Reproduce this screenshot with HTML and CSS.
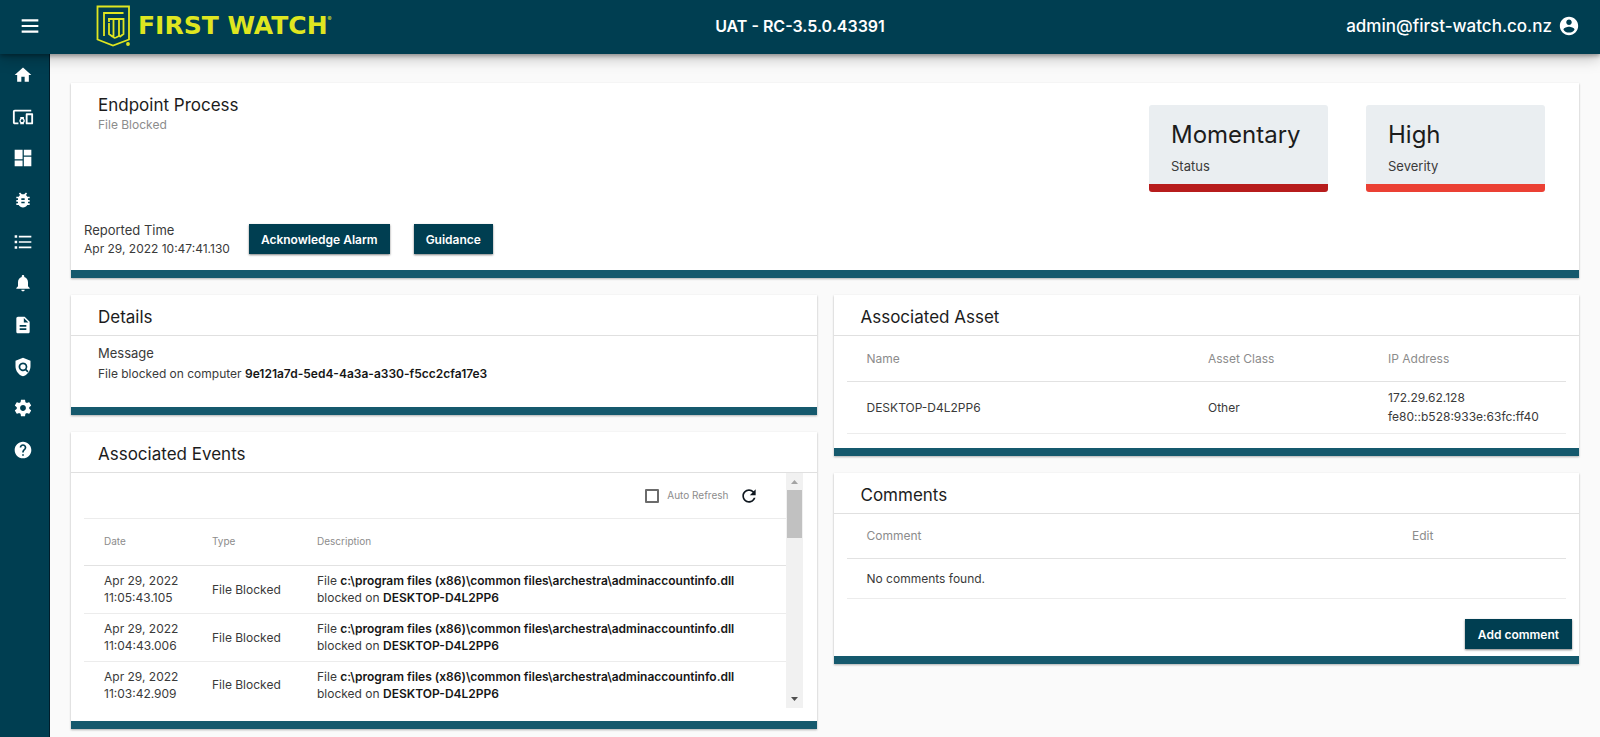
FILE: index.html
```html
<!DOCTYPE html>
<html lang="en">
<head>
<meta charset="utf-8">
<title>Endpoint Process - First Watch</title>
<link rel="stylesheet" href="styles.css">
</head>
<body>
<header class="topbar">
  <div class="topbar-left">
    <button class="icon-button" type="button" aria-label="Menu"><svg class="icon" viewBox="0 0 24 24"><path d="M2 4h20v2.600H2zM2 10.700h20v2.600H2zM2 17.400h20V20H2z"/></svg></button>
    <a class="logo" href="#">
      <svg class="logo-mark" viewBox="0 0 36 42" aria-hidden="true">
        <path d="M1.500 1.500h31.500v33L17 40.500 1.500 34.500z"/>
        <path class="logo-inner" d="M27.500 8H8V31M12 14h15.500v15l-4 3M13 18v10M13 14v3M17.500 14v17.500q0 2 2.500 1l3-1.500V14M13 27v2l4 3"/>
        <circle cx="32" cy="39" r="1"/>
      </svg>
      <span class="logo-text">FIRST WATCH</span><span class="logo-reg">®</span>
    </a>
  </div>
  <div class="version">UAT - RC-3.5.0.43391</div>
  <a class="account" href="#"><span>admin@first-watch.co.nz</span><svg class="account-icon" viewBox="0 0 24 24"><path d="M12 2C6.480 2 2 6.480 2 12s4.480 10 10 10 10-4.480 10-10S17.520 2 12 2zm0 3c1.660 0 3 1.340 3 3s-1.340 3-3 3-3-1.340-3-3 1.340-3 3-3zm0 14.200c-2.500 0-4.710-1.280-6-3.220.030-1.990 4-3.080 6-3.080 1.990 0 5.970 1.090 6 3.080-1.290 1.940-3.500 3.220-6 3.220z"/></svg></a>
</header>
<div class="shell">
  <nav class="sidebar" aria-label="Main">
    <a href="#" aria-label="Home"><svg class="icon" viewBox="0 0 24 24"><path d="M10 20v-6h4v6h5v-8h3L12 3 2 12h3v8z"/></svg></a>
    <a href="#" aria-label="Devices"><svg class="icon icon-wide" viewBox="0 0 24 24"><path d="M3 6h18V4H3c-1.100 0-2 .900-2 2v12c0 1.100.900 2 2 2h4v-2H3V6zm10 6H9v1.780c-.610.550-1 1.330-1 2.220s.390 1.670 1 2.220V20h4v-1.780c.610-.550 1-1.340 1-2.220s-.390-1.670-1-2.220V12zm-2 5.500c-.830 0-1.500-.670-1.500-1.500s.670-1.500 1.500-1.500 1.500.670 1.500 1.500-.670 1.500-1.500 1.500zM22 8h-6c-.500 0-1 .500-1 1v10c0 .500.500 1 1 1h6c.500 0 1-.500 1-1V9c0-.500-.500-1-1-1zm-1 10h-4v-8h4v8z"/></svg></a>
    <a href="#" aria-label="Dashboard"><svg class="icon" viewBox="0 0 24 24"><path d="M2 2h9.500v11.500H2zM2 15h9.500v7H2zM13 10.500h9V22h-9zM13 2h9v7h-9z"/></svg></a>
    <a href="#" aria-label="Threats"><svg class="icon" viewBox="0 0 24 24"><path d="M20 8h-2.810c-.450-.780-1.070-1.450-1.820-1.960L17 4.410 15.590 3l-2.170 2.170C12.960 5.060 12.490 5 12 5c-.490 0-.960.060-1.410.170L8.410 3 7 4.410l1.620 1.630C7.880 6.550 7.260 7.220 6.810 8H4v2h2.090c-.050.330-.090.660-.090 1v1H4v2h2v1c0 .340.040.670.090 1H4v2h2.810c1.040 1.790 2.970 3 5.190 3s4.150-1.210 5.190-3H20v-2h-2.090c.050-.330.090-.660.090-1v-1h2v-2h-2v-1c0-.340-.040-.670-.090-1H20V8zm-6 8h-4v-2h4v2zm0-4h-4v-2h4v2z"/></svg></a>
    <a href="#" aria-label="Lists"><svg class="icon" viewBox="0 0 24 24"><path d="M2 4h3v3H2zM2 10.500h3v3H2zM2 17h3v3H2zM7 4.500h15v2H7zM7 11h15v2H7zM7 17.500h15v2H7z"/></svg></a>
    <a href="#" aria-label="Alarms"><svg class="icon" viewBox="0 0 24 24"><path d="M12 22c1.100 0 2-.900 2-2h-4c0 1.100.890 2 2 2zm6-6v-5c0-3.070-1.640-5.640-4.500-6.320V4c0-.830-.670-1.500-1.500-1.500s-1.500.670-1.500 1.500v.680C7.630 5.360 6 7.920 6 11v5l-2 2v1h16v-1l-2-2z"/></svg></a>
    <a href="#" aria-label="Reports"><svg class="icon" viewBox="0 0 24 24"><path d="M14 2H6c-1.100 0-2 .900-2 2v16c0 1.100.890 2 2 2h12c1.100 0 2-.900 2-2V8l-6-6zm2 16H8v-2h8v2zm0-4H8v-2h8v2zm-3-5V3.500L18.500 9H13z"/></svg></a>
    <a href="#" aria-label="Policies"><svg class="icon" viewBox="0 0 24 24"><path fill-rule="evenodd" d="M12 1l9 3.500V11c0 5.550-3.840 10.740-9 12-5.160-1.260-9-6.450-9-12V4.500zM12 6.500a5.300 5.300 0 1 0 2.900 9.700l2.400 2.400 1.400-1.500-2.400-2.300A5.300 5.300 0 0 0 12 6.500zm0 2.100a3.200 3.200 0 1 1 0 6.400 3.200 3.200 0 0 1 0-6.400z"/></svg></a>
    <a href="#" aria-label="Settings"><svg class="icon" viewBox="0 0 24 24"><path d="M19.430 12.980c.040-.320.070-.640.070-.980s-.030-.660-.070-.980l2.110-1.650c.190-.150.240-.420.120-.640l-2-3.460c-.120-.220-.390-.300-.610-.220l-2.490 1c-.520-.400-1.080-.730-1.690-.980l-.380-2.650C14.460 2.180 14.250 2 14 2h-4c-.250 0-.460.180-.490.420l-.380 2.650c-.610.250-1.170.590-1.690.980l-2.490-1c-.230-.090-.490 0-.610.220l-2 3.460c-.130.220-.070.490.120.640l2.110 1.650c-.040.320-.070.650-.070.980s.030.660.070.980l-2.110 1.650c-.190.150-.240.420-.120.640l2 3.460c.120.220.390.300.610.220l2.490-1c.520.400 1.080.730 1.690.980l.380 2.650c.030.240.240.420.490.420h4c.250 0 .460-.180.490-.420l.380-2.650c.610-.250 1.170-.590 1.690-.980l2.490 1c.230.090.490 0 .610-.220l2-3.460c.120-.220.070-.490-.120-.640l-2.110-1.650zM12 15.500c-1.930 0-3.500-1.570-3.500-3.500s1.570-3.500 3.500-3.500 3.500 1.570 3.500 3.500-1.570 3.500-3.500 3.500z"/></svg></a>
    <a href="#" aria-label="Help"><svg class="icon" viewBox="0 0 24 24"><path d="M12 2C6.480 2 2 6.480 2 12s4.480 10 10 10 10-4.480 10-10S17.520 2 12 2zm1 17h-2v-2h2v2zm2.070-7.750l-.900.920C13.450 12.900 13 13.500 13 15h-2v-.500c0-1.100.450-2.100 1.170-2.830l1.240-1.260c.370-.360.590-.860.590-1.410 0-1.100-.900-2-2-2s-2 .900-2 2H8c0-2.210 1.790-4 4-4s4 1.790 4 4c0 .880-.360 1.680-.930 2.250z"/></svg></a>
  </nav>
  <main class="content">
    <section class="card summary">
      <div class="summary-top">
        <div>
          <h1 class="heading">Endpoint Process</h1>
          <p class="subtitle">File Blocked</p>
        </div>
        <div class="tiles">
          <div class="tile tile-status"><div class="tile-value">Momentary</div><div class="tile-label">Status</div></div>
          <div class="tile tile-severity"><div class="tile-value">High</div><div class="tile-label">Severity</div></div>
        </div>
      </div>
      <div class="summary-bottom">
        <div class="reported">
          <div class="label">Reported Time</div>
          <div class="value">Apr 29, 2022 10:47:41.130</div>
        </div>
        <div class="summary-actions">
          <button class="button" type="button">Acknowledge Alarm</button>
          <button class="button" type="button">Guidance</button>
        </div>
      </div>
    </section>
    <div class="columns">
      <div class="column">
        <section class="card">
          <h2 class="heading card-heading">Details</h2>
          <div class="details">
            <div class="label">Message</div>
            <div class="value">File blocked on computer <b>9e121a7d-5ed4-4a3a-a330-f5cc2cfa17e3</b></div>
          </div>
        </section>
        <section class="card">
          <h2 class="heading card-heading">Associated Events</h2>
          <div class="scroller">
            <div class="scroll-content">
              <div class="toolbar">
                <label class="check"><input type="checkbox">Auto Refresh</label>
                <button class="icon-button" type="button" aria-label="Refresh"><svg class="refresh-icon" viewBox="0 0 24 24"><path d="M17.650 6.350C16.200 4.900 14.210 4 12 4c-4.420 0-7.990 3.580-7.990 8s3.570 8 7.990 8c3.730 0 6.840-2.550 7.730-6h-2.080c-.820 2.330-3.040 4-5.650 4-3.310 0-6-2.690-6-6s2.690-6 6-6c1.660 0 3.140.690 4.220 1.780L13 11h7V4l-2.350 2.350z"/></svg></button>
              </div>
              <table class="events">
                <colgroup><col class="col-date"><col class="col-type"><col></colgroup>
                <thead><tr><th>Date</th><th>Type</th><th>Description</th></tr></thead>
                <tbody>
                  <tr><td>Apr 29, 2022<br>11:05:43.105</td><td>File Blocked</td><td>File <b>c:\program files (x86)\common files\archestra\adminaccountinfo.dll</b><br>blocked on <b>DESKTOP-D4L2PP6</b></td></tr>
                  <tr><td>Apr 29, 2022<br>11:04:43.006</td><td>File Blocked</td><td>File <b>c:\program files (x86)\common files\archestra\adminaccountinfo.dll</b><br>blocked on <b>DESKTOP-D4L2PP6</b></td></tr>
                  <tr><td>Apr 29, 2022<br>11:03:42.909</td><td>File Blocked</td><td>File <b>c:\program files (x86)\common files\archestra\adminaccountinfo.dll</b><br>blocked on <b>DESKTOP-D4L2PP6</b></td></tr>
                </tbody>
              </table>
            </div>
            <div class="scrollbar" aria-hidden="true">
              <svg class="arrow arrow-up" viewBox="0 0 17 17"><path d="M5 11l3.500-4 3.500 4z"/></svg>
              <div class="thumb"></div>
              <svg class="arrow arrow-down" viewBox="0 0 17 17"><path d="M5 6l3.500 4L12 6z"/></svg>
            </div>
          </div>
        </section>
      </div>
      <div class="column">
        <section class="card">
          <h2 class="heading card-heading">Associated Asset</h2>
          <div class="table-wrap asset-wrap">
            <table class="asset">
              <colgroup><col><col class="col-class"><col class="col-ip"></colgroup>
              <thead><tr><th>Name</th><th>Asset Class</th><th>IP Address</th></tr></thead>
              <tbody><tr><td>DESKTOP-D4L2PP6</td><td>Other</td><td>172.29.62.128<br>fe80::b528:933e:63fc:ff40</td></tr></tbody>
            </table>
          </div>
        </section>
        <section class="card">
          <h2 class="heading card-heading">Comments</h2>
          <div class="table-wrap">
            <table class="comments">
              <colgroup><col><col class="col-edit"></colgroup>
              <thead><tr><th>Comment</th><th>Edit</th></tr></thead>
              <tbody><tr><td colspan="2">No comments found.</td></tr></tbody>
            </table>
          </div>
          <div class="actions"><button class="button" type="button">Add comment</button></div>
        </section>
      </div>
    </div>
  </main>
</div>
</body>
</html>
```
FILE: styles.css
```css
* { box-sizing: border-box; }

body {
  margin: 0;
  min-height: 100vh;
  display: flex;
  flex-direction: column;
  background: #fafafa;
  color: #3a3a3a;
  font-family: Inter, "Noto Sans", sans-serif;
  font-size: 12px;
  line-height: 19px;
}

h1, h2, p { margin: 0; }
a { color: inherit; text-decoration: none; }
b { font-weight: 600; color: #161616; }
button { font-family: inherit; cursor: pointer; }
svg { display: block; fill: currentColor; }

.topbar {
  position: relative;
  z-index: 1;
  height: 54px;
  padding: 0 20px 2px;
  display: grid;
  grid-template-columns: 1fr auto 1fr;
  align-items: center;
  background: #003e51;
  color: #fff;
  font-size: 16px;
  font-weight: 600;
  box-shadow: 0 2px 4px rgba(0, 0, 0, .3), 0 4px 14px rgba(0, 0, 0, .25);
}
.topbar-left { display: flex; align-items: center; gap: 56px; }
.icon-button { padding: 0; border: 0; background: none; color: inherit; }
.icon { width: 20px; height: 20px; }
.icon-wide { width: 22px; height: 22px; }
.logo { display: flex; align-items: center; color: #dfe620; }
.logo-mark { width: 36px; height: 42px; fill: none; stroke: currentColor; stroke-width: 1.8; }
.logo-text { margin-left: 6px; font: bold 25px/24px "DejaVu Sans", sans-serif; }
.logo-reg { align-self: flex-start; padding-top: 4px; font-size: 6px; }
.account { justify-self: end; display: flex; align-items: center; gap: 6px; font-size: 17px; font-weight: 500; }
.account-icon { width: 22px; height: 22px; }

.shell { flex: 1; display: flex; }
.sidebar {
  width: 50px;
  flex: none;
  display: grid;
  grid-template-rows: repeat(10, 1fr);
  padding-right: 4px;
  padding-bottom: 266px;
  background: #003e51;
  border-right: 1px solid #001d2b;
  color: #fff;
}
.sidebar a { display: flex; align-items: center; justify-content: center; }

.content { flex: 1; min-width: 0; padding: 29px 21px 7px; }
.card {
  background: #fff;
  border-bottom: 8px solid #15596d;
  box-shadow: 0 1px 2px rgba(0, 0, 0, .3);
}
.heading { color: #1c1c1c; font-size: 17px; font-weight: 400; line-height: 20px; }
.card-heading { padding: 12px 27px 8px; border-bottom: 1px solid #e0e0e0; }
.label { font-size: 13px; line-height: 20px; }
.value { font-size: 12px; line-height: 18px; }

.summary-top { display: flex; justify-content: space-between; padding: 12px 34px 0 27px; }
.subtitle { color: #8c8c8c; }
.tiles { display: flex; gap: 38px; padding-top: 10px; }
.tile {
  width: 179px;
  padding: 16px 22px 8px;
  background: #eaeef1;
  border-bottom: 8px solid #b71c1c;
  border-radius: 3px;
}
.tile-severity { border-bottom-color: #eb4034; }
.tile-value { color: #1c1c1c; font-size: 24px; line-height: 28px; }
.tile-label { padding-top: 8px; font-size: 13px; }
.summary-bottom { display: flex; align-items: center; gap: 19px; padding: 28px 13px 12px; }
.summary-actions { display: flex; gap: 24px; }

.button {
  height: 30px;
  padding: 0 13px;
  background: #003e51;
  border: 0;
  color: #fff;
  font-size: 12px;
  font-weight: 600;
  box-shadow: 0 1px 2px rgba(0, 0, 0, .5);
}
.summary-actions .button { padding: 0 12px; }

.columns { display: grid; grid-template-columns: 1fr 1fr; gap: 17px; margin-top: 17px; }
.column { display: flex; flex-direction: column; gap: 17px; min-width: 0; }
.details { display: grid; gap: 2px; padding: 7px 27px 24px; }

table { width: 100%; border-collapse: collapse; table-layout: fixed; }
th, td { padding: 0 20px; text-align: left; }
th { height: 45px; color: #8c8c8c; font-weight: 400; border-bottom: 1px solid #e2e2e2; }
td { border-bottom: 1px solid #ececec; }

.scroller { display: flex; padding: 0 14px 13px 13px; }
.scroll-content { flex: 1; min-width: 0; }
.toolbar {
  height: 46px;
  display: flex;
  align-items: center;
  justify-content: flex-end;
  gap: 10px;
  padding-right: 27px;
  border-bottom: 1px solid #ececec;
  color: #8c8c8c;
  font-size: 10px;
}
.toolbar .icon-button { color: #101820; }
.check { display: flex; align-items: center; gap: 8px; }
.check input {
  appearance: none;
  width: 14px;
  height: 14px;
  margin: 0;
  border: 2px solid #6b6b6b;
  border-radius: 1px;
}
.refresh-icon { width: 20px; height: 20px; }
.events { font-size: 12px; line-height: 17px; }
.events th { height: 46px; font-size: 10px; }
.events td { height: 48px; }
.events tr:last-child td { height: 47px; border-bottom: 0; }
.events th:nth-child(n+2), .events td:nth-child(n+2) { padding: 0; }
.col-date { width: 128px; }
.col-type { width: 105px; }
.scrollbar { width: 17px; display: flex; flex-direction: column; background: #f1f1f1; }
.arrow { width: 17px; height: 17px; }
.arrow-up { fill: #a3a3a3; }
.arrow-down { margin-top: auto; fill: #505050; }
.thumb { height: 48px; margin: 0 1px; background: #c1c1c1; }

.table-wrap { padding: 0 13px; }
.asset-wrap { padding-bottom: 14px; }
.asset td { height: 52px; }
.asset th:nth-child(n+2), .asset td:nth-child(n+2), .comments th:last-child { padding: 0; }
.col-class { width: 180px; }
.col-ip { width: 178px; }
.comments td { height: 40px; }
.col-edit { width: 154px; }
.actions { display: flex; justify-content: flex-end; padding: 20px 7px 7px; }
```
